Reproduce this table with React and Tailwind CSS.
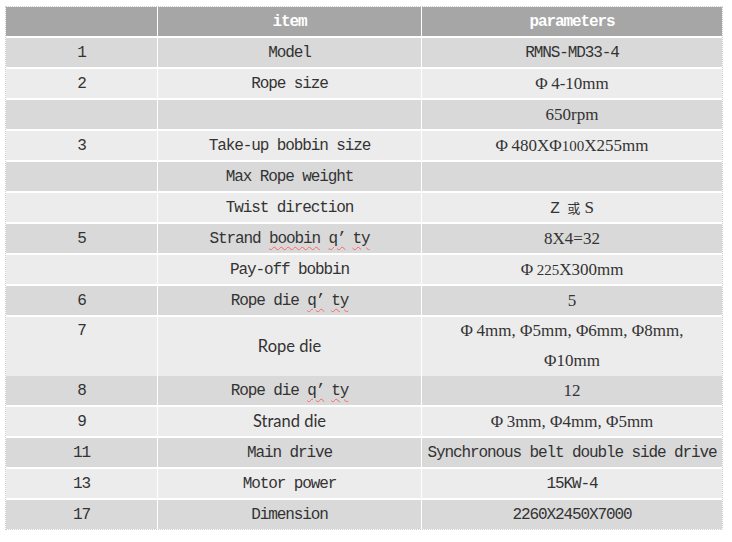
import React from "react";

const mono = "font-['Liberation_Mono',monospace] text-[16px] tracking-[-1.1px]";
const serif = "font-['Liberation_Serif',serif] text-[17px] tracking-normal";
const sans = "font-['Lato',sans-serif] text-[16.5px] tracking-normal";

const Wavy = ({ children }) => (
  <span className="underline decoration-wavy decoration-red-400 decoration-1 underline-offset-[3px]">
    {children}
  </span>
);

// fullwidth-looking apostrophe like SimSun
const Apos = () => <span className="pr-[7px]">’</span>;

const Qty = () => (
  <Wavy>
    q<Apos />ty
  </Wavy>
);

const Phi = () => <span className="inline-block w-[16px] text-left">Φ</span>;

const rows = [
  { no: "1", item: "Model", param: <span className={mono}>RMNS-MD33-4</span> },
  {
    no: "2",
    item: "Rope size",
    param: (
      <span className={serif}>
        <Phi />4-10mm
      </span>
    ),
  },
  { no: "", item: "", param: <span className={serif}>650rpm</span> },
  {
    no: "3",
    item: "Take-up bobbin size",
    param: (
      <span className={serif}>
        <Phi />480XΦ<span className="text-[15px]">100</span>X255mm
      </span>
    ),
  },
  { no: "", item: "Max Rope weight", param: "" },
  {
    no: "",
    item: "Twist direction",
    param: (
      <span>
        <span className={mono}>Z </span>
        <span className="font-['Noto_Sans_CJK_SC',sans-serif] text-[13px]">或</span>
        <span className={serif}> S</span>
      </span>
    ),
  },
  {
    no: "5",
    item: (
      <span>
        Strand <Wavy>boobin</Wavy> <Qty />
      </span>
    ),
    param: <span className={serif}>8X4=32</span>,
  },
  {
    no: "",
    item: "Pay-off bobbin",
    param: (
      <span className={serif}>
        <Phi />
        <span className="text-[15px]">225</span>X300mm
      </span>
    ),
  },
  {
    no: "6",
    item: (
      <span>
        Rope die <Qty />
      </span>
    ),
    param: <span className={serif}>5</span>,
  },
  {
    no: "7",
    item: <span className={sans}>Rope die</span>,
    tall: true,
    param: (
      <span className={`${serif} leading-[30px] -mt-[2px]`}>
        <Phi />4mm, Φ5mm, Φ6mm, Φ8mm,
        <br />
        Φ10mm
      </span>
    ),
  },
  {
    no: "8",
    item: (
      <span>
        Rope die <Qty />
      </span>
    ),
    param: <span className={serif}>12</span>,
  },
  {
    no: "9",
    item: <span className={sans}>Strand die</span>,
    param: (
      <span className={serif}>
        <Phi />3mm, Φ4mm, Φ5mm
      </span>
    ),
  },
  {
    no: "11",
    item: "Main drive",
    param: <span className={mono}>Synchronous belt double side drive</span>,
  },
  { no: "13", item: "Motor power", param: <span className={mono}>15KW-4</span> },
  { no: "17", item: "Dimension", param: <span className={mono}>2260X2450X7000</span> },
];

export default function App() {
  return (
    <div className="w-[732px] h-[542px] bg-white pt-[7px] pl-[6px] text-[#333333]">
      <div className="w-[716px] flex flex-col gap-[2px] outline outline-1 outline-dotted outline-[#d0d0d0]">
        {/* header */}
        <div className="grid grid-cols-[151px_263px_300px] gap-x-px h-[29px]">
          <div className="bg-[#a6a6a6]" />
          <div className={`bg-[#a6a6a6] flex items-center justify-center text-white font-bold ${mono}`}>
            item
          </div>
          <div className={`bg-[#a6a6a6] flex items-center justify-center text-white font-bold ${mono}`}>
            parameters
          </div>
        </div>

        {rows.map((r, i) => {
          const bg = i % 2 === 0 ? "bg-[#d9d9d9]" : "bg-[#ececec]";
          return (
            <div
              key={i}
              className={`grid grid-cols-[151px_263px_300px] gap-x-px ${r.tall ? "h-[57px]" : "h-[29px]"}`}
            >
              <div
                className={`${bg} flex justify-center ${mono} ${r.tall ? "items-start pt-[2px]" : "items-center"}`}
              >
                {r.no}
              </div>
              <div className={`${bg} flex items-center justify-center whitespace-pre ${mono}`}>
                {r.item}
              </div>
              <div className={`${bg} flex items-center justify-center text-center whitespace-nowrap pt-[1px]`}>
                {r.param}
              </div>
            </div>
          );
        })}
      </div>
    </div>
  );
}
